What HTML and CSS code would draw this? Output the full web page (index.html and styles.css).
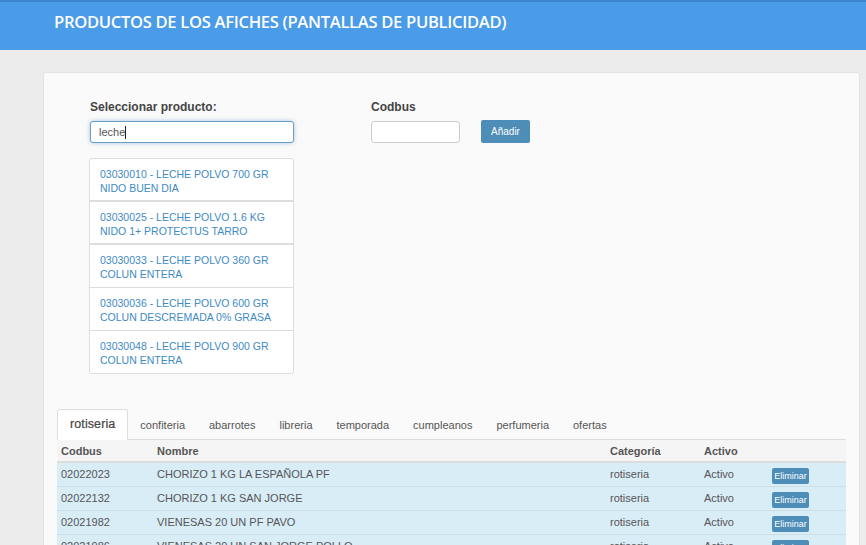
FILE: index.html
```html
<!DOCTYPE html>
<html lang="es">
<head>
<meta charset="utf-8">
<title>Productos de los afiches</title>
<link rel="stylesheet" href="styles.css">
</head>
<body>
<header class="topbar">
  <h1 class="title">PRODUCTOS DE LOS AFICHES (PANTALLAS DE PUBLICIDAD)</h1>
</header>
<main class="card">
  <div class="form-row">
    <div class="field field-product">
      <label class="label">Seleccionar producto:</label>
      <div class="input input-focus">leche<span class="caret"></span></div>
      <ul class="suggest">
        <li class="suggest-item thick">03030010 - LECHE POLVO 700 GR<br>NIDO BUEN DIA</li>
        <li class="suggest-item thick">03030025 - LECHE POLVO 1.6 KG<br>NIDO 1+ PROTECTUS TARRO</li>
        <li class="suggest-item">03030033 - LECHE POLVO 360 GR<br>COLUN ENTERA</li>
        <li class="suggest-item">03030036 - LECHE POLVO 600 GR<br>COLUN DESCREMADA 0% GRASA</li>
        <li class="suggest-item">03030048 - LECHE POLVO 900 GR<br>COLUN ENTERA</li>
      </ul>
    </div>
    <div class="field field-codbus">
      <label class="label">Codbus</label>
      <div class="codbus-row">
        <div class="input input-small"></div>
        <button class="btn btn-add">Añadir</button>
      </div>
    </div>
  </div>

  <nav class="tabs">
    <a class="tab active">rotiseria</a>
    <a class="tab">confiteria</a>
    <a class="tab">abarrotes</a>
    <a class="tab">libreria</a>
    <a class="tab">temporada</a>
    <a class="tab">cumpleanos</a>
    <a class="tab">perfumeria</a>
    <a class="tab">ofertas</a>
  </nav>
  <table class="grid">
    <thead>
      <tr><th class="c1">Codbus</th><th class="c2">Nombre</th><th class="c3">Categoría</th><th class="c4">Activo</th><th class="c5"></th></tr>
    </thead>
    <tbody>
      <tr><td>02022023</td><td>CHORIZO 1 KG LA ESPAÑOLA PF</td><td>rotiseria</td><td>Activo</td><td><button class="btn btn-del">Eliminar</button></td></tr>
      <tr><td>02022132</td><td>CHORIZO 1 KG SAN JORGE</td><td>rotiseria</td><td>Activo</td><td><button class="btn btn-del">Eliminar</button></td></tr>
      <tr><td>02021982</td><td>VIENESAS 20 UN PF PAVO</td><td>rotiseria</td><td>Activo</td><td><button class="btn btn-del">Eliminar</button></td></tr>
      <tr><td>02021986</td><td>VIENESAS 20 UN SAN JORGE POLLO</td><td>rotiseria</td><td>Activo</td><td><button class="btn btn-del">Eliminar</button></td></tr>
      <tr><td>02021990</td><td>VIENESAS 20 UN SAN JORGE</td><td>rotiseria</td><td>Activo</td><td><button class="btn btn-del">Eliminar</button></td></tr>
    </tbody>
  </table>
</main>
</body>
</html>
```

FILE: styles.css
```css
* { box-sizing: border-box; }
html, body { margin: 0; padding: 0; }
body {
  background: #ececec;
  font-family: "Liberation Sans", Arial, sans-serif;
  color: #555;
  height: 545px;
  overflow: hidden;
}
.topbar {
  height: 50px;
  background: #4a9be8;
  border-top: 2px solid #3d86cf;
  padding-left: 54px;
  display: flex;
  align-items: center;
}
.title {
  margin: 0;
  font-family: "Open Sans", sans-serif;
  font-weight: 600;
  font-size: 16.6px;
  letter-spacing: -0.32px;
  color: #fff;
  position: relative;
  top: -5px;
}
.card {
  margin: 22px 6px 0 43px;
  background: #fafafa;
  border: 1px solid #e3e3e3;
  border-radius: 3px;
  padding: 0 13px 0 13px;
  min-height: 600px;
}
.form-row {
  display: flex;
  padding: 26px 0 0 33px;
}
.field-product { width: 204px; }
.field-codbus { margin-left: 77px; }
.label {
  display: block;
  font-size: 12px;
  font-weight: bold;
  color: #444;
  line-height: 16px;
  margin-bottom: 6px;
}
.input {
  height: 22px;
  border: 1px solid #ccc;
  border-radius: 3px;
  background: #fff;
  font-size: 11px;
  line-height: 20px;
  padding-left: 8px;
  color: #555;
}
.input-focus {
  border-color: #6a9fc4;
  box-shadow: 0 0 4px rgba(102, 150, 200, 0.55);
}
.caret {
  display: inline-block;
  width: 1px;
  height: 13px;
  background: #222;
  vertical-align: -3px;
}
.input-small { width: 89px; }
.codbus-row { display: flex; align-items: center; gap: 21px; }
.btn {
  border: none;
  background: #4e8db8;
  color: #fff;
  font-family: "Liberation Sans", Arial, sans-serif;
  border-radius: 2px;
  cursor: pointer;
}
.btn-add {
  height: 23px;
  width: 49px;
  font-size: 10px;
  padding: 0;
  margin-top: -1px;
}
.suggest {
  list-style: none;
  margin: 15px 0 0 -1px;
  padding: 0;
  width: 205px;
  border: 1px solid #ddd;
  border-radius: 3px;
  background: #fff;
}
.suggest-item {
  font-size: 10.5px;
  line-height: 14px;
  color: #3e8ac4;
  padding: 8px 10px 8px 10px;
  height: 43px;
  border-bottom: 1px solid #ddd;
}
.suggest-item.thick { border-bottom: 2px solid #ddd; height: 43px; }
.suggest-item:last-child { border-bottom: none; height: 42px; }
.tabs {
  display: flex;
  margin-top: 35px;
  border-bottom: 1px solid #ddd;
  height: 31px;
}
.tab {
  font-size: 11px;
  color: #555;
  padding: 1px 11px 0;
  line-height: 29px;
  border: 1px solid transparent;
  border-radius: 3px 3px 0 0;
}
.tab.active {
  background: #fff;
  border-color: #ddd;
  border-bottom-color: #fff;
  height: 31px;
  color: #444;
  font-size: 12.5px;
  padding: 0 12px;
  letter-spacing: 0.1px;
  -webkit-text-stroke: 0.2px #444;
}
.grid {
  width: 789px;
  border-collapse: collapse;
  font-size: 11px;
}
.grid th {
  background: #f5f5f5;
  text-align: left;
  font-weight: bold;
  height: 22px;
  padding: 0 4px;
  border-bottom: 2px solid #ddd;
  color: #555;
}
.c1 { width: 96px; }
.c2 { width: 453px; }
.c3 { width: 94px; }
.c4 { width: 68px; }
.grid td {
  background: #d9edf7;
  height: 24px;
  padding: 0 4px;
  border-bottom: 1px solid #cfdfe8;
  color: #555;
}
.btn-del {
  font-size: 9px;
  height: 16px;
  width: 37px;
  padding: 0;
  margin-top: 3px;
  display: block;
}
```
